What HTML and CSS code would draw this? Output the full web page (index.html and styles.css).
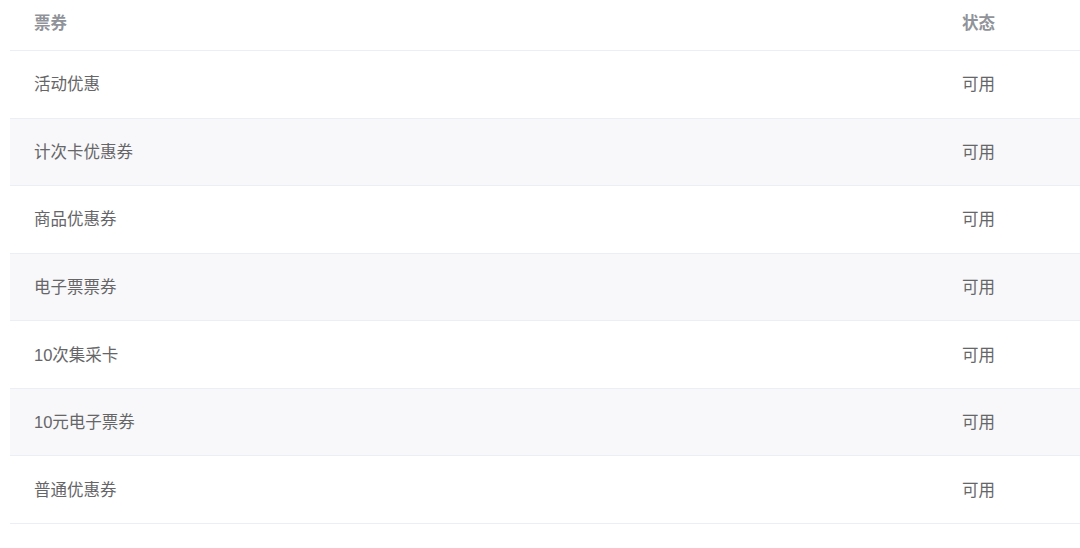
FILE: index.html
```html
<!DOCTYPE html>
<html lang="zh">
<head>
<meta charset="utf-8">
<link rel="stylesheet" href="styles.css">
</head>
<body>
<div class="table">
  <div class="row head"><div class="cell">票券</div><div class="cell">状态</div></div>
  <div class="row"><div class="cell">活动优惠</div><div class="cell">可用</div></div>
  <div class="row stripe"><div class="cell">计次卡优惠券</div><div class="cell">可用</div></div>
  <div class="row"><div class="cell">商品优惠券</div><div class="cell">可用</div></div>
  <div class="row stripe"><div class="cell">电子票票券</div><div class="cell">可用</div></div>
  <div class="row"><div class="cell">10次集采卡</div><div class="cell">可用</div></div>
  <div class="row stripe"><div class="cell">10元电子票券</div><div class="cell">可用</div></div>
  <div class="row"><div class="cell">普通优惠券</div><div class="cell">可用</div></div>
</div>
</body>
</html>
```
FILE: styles.css
```css
html, body {
  margin: 0;
  padding: 0;
  background: #fff;
  overflow: hidden;
}
body {
  font-family: "Liberation Sans", "Noto Sans CJK SC", sans-serif;
  font-size: 16.5px;
  color: #666668;
}
.table {
  margin-left: 10px;
  width: 1090px;
}
.row {
  display: grid;
  grid-template-columns: 928px 1fr;
  align-items: center;
  height: 67.57px;
  padding-bottom: 2px;
  box-sizing: border-box;
  border-bottom: 1px solid #ebeef5;
}
.row.head {
  height: 51px;
  padding-bottom: 6px;
  font-weight: bold;
  color: #909399;
}
.row.stripe {
  background: #f8f8fa;
}
.cell {
  padding-left: 24px;
}
```
